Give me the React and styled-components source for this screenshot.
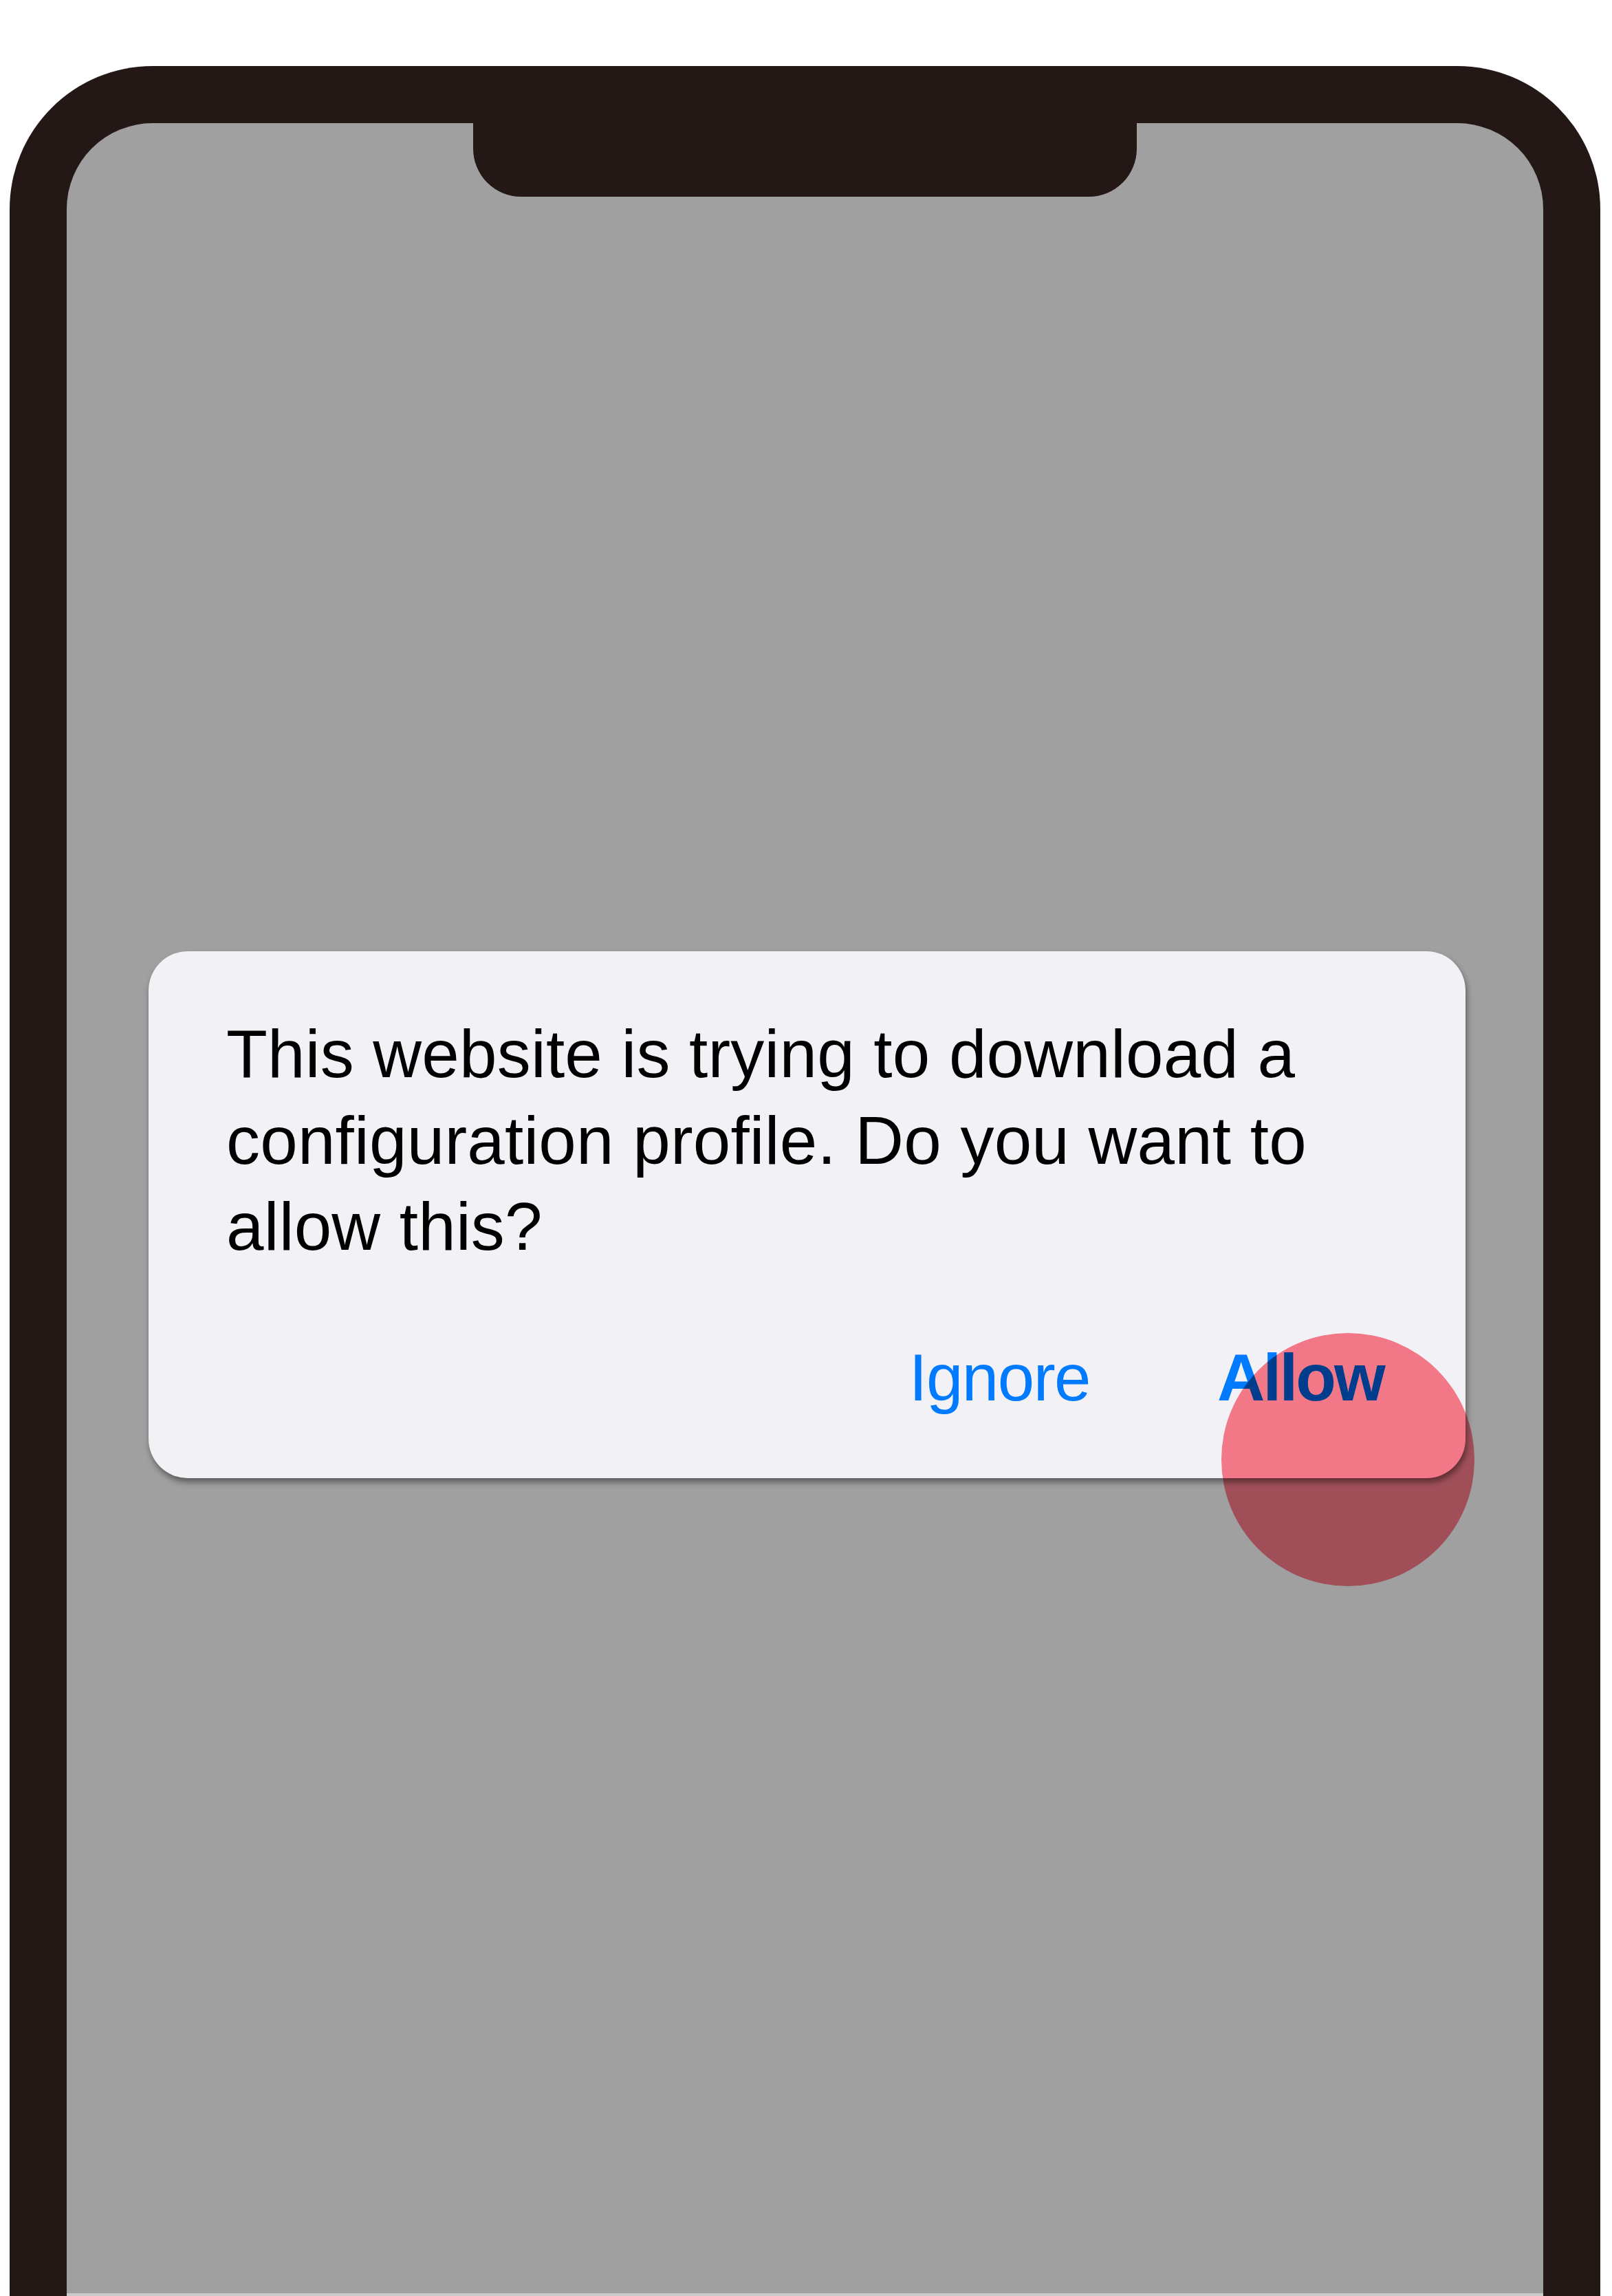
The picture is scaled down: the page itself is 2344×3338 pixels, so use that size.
import React from "react";
import styled, { createGlobalStyle } from "styled-components";

const GlobalStyle = createGlobalStyle`
  html, body {
    margin: 0;
    padding: 0;
    background: #ffffff;
    overflow: hidden;
  }
  body {
    font-family: "Liberation Sans", Arial, sans-serif;
  }
`;

const Page = styled.div`
  padding: 96px 0 0 14px;
  height: 3242px;
`;

const PhoneFrame = styled.div`
  width: 2313px;
  box-sizing: border-box;
  background: #231816;
  border-radius: 208px 208px 0 0;
  padding: 83px 83px 0;
`;

const Screen = styled.div`
  position: relative;
  display: flex;
  flex-direction: column;
  height: 3155px;
  background: #a0a0a0;
  border-radius: 125px 125px 0 0;
  border-bottom: 4px solid #cbcbcb;
`;

const Notch = styled.div`
  align-self: center;
  width: 965px;
  height: 107px;
  background: #231816;
  border-radius: 0 0 70px 70px;
`;

const Dialog = styled.div`
  position: relative;
  margin: 1097px 0 0 119px;
  width: 1915px;
  box-sizing: border-box;
  padding: 87px 116px 91px 113px;
  background: #f2f2f6;
  border-radius: 57px;
  box-shadow: 2px 6px 9px rgba(0, 0, 0, 0.42);
`;

const Message = styled.p`
  margin: 0;
  font-size: 98px;
  line-height: 125.5px;
  letter-spacing: 0.2px;
  color: #000000;
`;

const Actions = styled.div`
  display: flex;
  justify-content: flex-end;
  align-items: baseline;
  margin: 101px 0 0;
  padding-right: 3px;
  gap: 185px;
`;

const ActionButton = styled.button`
  border: none;
  background: none;
  padding: 0;
  font-family: "Liberation Sans", Arial, sans-serif;
  font-size: 96px;
  line-height: 110px;
  color: #007aff;
  font-weight: ${(p) => (p.$primary ? 700 : 400)};
  letter-spacing: ${(p) => (p.$primary ? "-2.8px" : "-1.5px")};
`;

const TapMark = styled.span`
  position: absolute;
  left: 1560px;
  top: 555px;
  width: 368px;
  height: 368px;
  border-radius: 50%;
  background: rgb(255, 126, 141);
  mix-blend-mode: multiply;
  pointer-events: none;
`;

const App = () => {
  return (
    <Page>
      <GlobalStyle />
      <PhoneFrame>
        <Screen>
          <Notch />
          <Dialog>
            <Message>
              This website is trying to download a configuration profile. Do
              you want to allow this?
            </Message>
            <Actions>
              <ActionButton>Ignore</ActionButton>
              <ActionButton $primary>Allow</ActionButton>
            </Actions>
            <TapMark />
          </Dialog>
        </Screen>
      </PhoneFrame>
    </Page>
  );
};

export default App;
